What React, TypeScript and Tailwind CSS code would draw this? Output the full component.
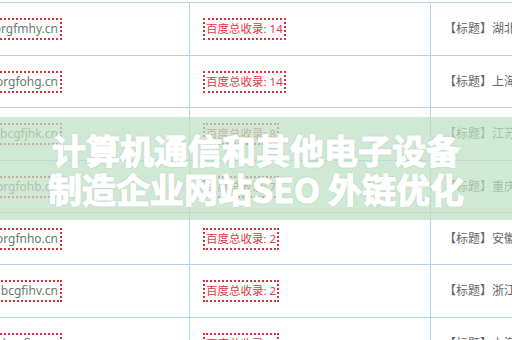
import React from "react";

// Rows of the faded link table behind the title
const ROWS = [
  { domain: "www.orgfmhy.cn", count: 14, title: "湖北省计算机通信设备" },
  { domain: "www.orgfohg.cn", count: 14, title: "上海市计算机通信设备" },
  { domain: "www.bcgfjhk.cn", count: 8, title: "江苏省计算机通信设备" },
  { domain: "www.orgfohb.cn", count: 7, title: "重庆市计算机通信设备" },
  { domain: "www.orgfnho.cn", count: 2, title: "安徽省计算机通信设备" },
  { domain: "www.bcgfihv.cn", count: 2, title: "浙江省计算机通信设备" },
  { domain: "www.abcgflm.cn", count: 1, title: "上海市计算机通信设备" },
];

const ROW_HEIGHTS = ["h-[53px]", "h-[52px]", "h-[53px]", "h-[52px]", "h-[52px]", "h-[53px]", "h-[53px]"];

export default function App() {
  return (
    <div className="relative w-[512px] h-[340px] overflow-hidden bg-white font-['Noto_Sans','Noto_Sans_CJK_SC',sans-serif]">
      {/* Table */}
      <div className="pt-[2px]">
        {ROWS.map((row, i) => (
          <div key={i} className={`flex border-t border-[#b5d3e9] ${ROW_HEIGHTS[i]}`}>
            <div className="w-[190px] shrink-0 border-r border-[#b5d3e9] flex items-center justify-end pr-[127px]">
              <span className="h-[22px] flex items-center px-[2px] border-2 border-dotted border-[#d6303c] text-[12px] text-[#687a6e] whitespace-nowrap">
                {row.domain}
              </span>
            </div>
            <div className="w-[241px] shrink-0 border-r border-[#b5d3e9] flex items-center pl-[13px]">
              <span className="h-[22px] flex items-center px-[1px] border-2 border-dotted border-[#d6303c] text-[11.5px] text-[#e0393e] whitespace-nowrap">
                百度总收录: {row.count}
              </span>
            </div>
            <div className="flex-1 flex items-center pl-[13px] overflow-hidden">
              <span className="text-[12px] text-[#666] whitespace-nowrap">【标题】{row.title}</span>
            </div>
          </div>
        ))}
      </div>

      {/* Title band */}
      <div className="absolute left-0 right-0 top-[117px] h-[103px] bg-[rgba(190,225,195,0.72)] flex flex-col items-center justify-center">
        <div className="text-white font-bold text-[34px] leading-[39px] text-center font-['Noto_Sans_CJK_SC',sans-serif] [-webkit-text-stroke:1.2px_white] [text-shadow:0_0_3px_rgba(0,0,0,0.15)] whitespace-nowrap">
          <div>计算机通信和其他电子设备</div>
          <div>制造企业网站SEO 外链优化</div>
        </div>
      </div>
    </div>
  );
}
